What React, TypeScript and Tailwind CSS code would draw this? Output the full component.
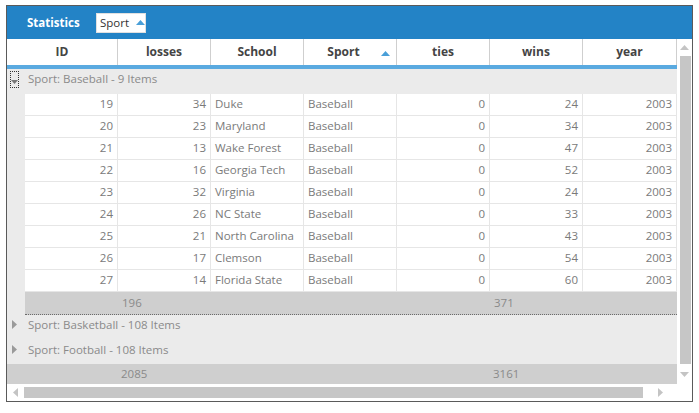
import React from 'react'

type Row = { id: number; losses: number; school: string; ties: number; wins: number; year: number }

// grouped data for the first (expanded) group
const rows: Row[] = [
  { id: 19, losses: 34, school: 'Duke', ties: 0, wins: 24, year: 2003 },
  { id: 20, losses: 23, school: 'Maryland', ties: 0, wins: 34, year: 2003 },
  { id: 21, losses: 13, school: 'Wake Forest', ties: 0, wins: 47, year: 2003 },
  { id: 22, losses: 16, school: 'Georgia Tech', ties: 0, wins: 52, year: 2003 },
  { id: 23, losses: 32, school: 'Virginia', ties: 0, wins: 24, year: 2003 },
  { id: 24, losses: 26, school: 'NC State', ties: 0, wins: 33, year: 2003 },
  { id: 25, losses: 21, school: 'North Carolina', ties: 0, wins: 43, year: 2003 },
  { id: 26, losses: 17, school: 'Clemson', ties: 0, wins: 54, year: 2003 },
  { id: 27, losses: 14, school: 'Florida State', ties: 0, wins: 60, year: 2003 },
]

const font = { fontFamily: '"Open Sans", "Noto Sans", sans-serif' }

const UpTri = ({ className = '' }: { className?: string }) => (
  <svg width="9" height="5" viewBox="0 0 9 5" className={className}>
    <path d="M0 5 L4.5 0 L9 5 Z" fill="currentColor" />
  </svg>
)

const RightTri = ({ color = '#9a9a9a' }: { color?: string }) => (
  <svg width="5" height="9" viewBox="0 0 5 9">
    <path d="M0 0 L5 4.5 L0 9 Z" fill={color} />
  </svg>
)

const HeaderCell = ({ label, w, sort }: { label: string; w: string; sort?: boolean }) => (
  <div className={`${w} relative h-full flex items-center justify-center border-r border-[#cfcfcf] font-bold text-[12px] text-[#444] ${sort ? 'pr-[13px]' : ''}`}>
    {label}
    {sort && <UpTri className="absolute right-[6px] top-[12px] text-[#4a9fd8]" />}
  </div>
)

const Cell = ({ children, w, right }: { children: React.ReactNode; w: string; right?: boolean }) => (
  <div className={`${w} h-full flex items-center border-r border-[#e6e6e6] truncate ${right ? 'justify-end pr-[4px]' : 'pl-[4px]'}`}>
    {children}
  </div>
)

const GroupRow = ({ label, collapsed }: { label: string; collapsed: boolean }) => (
  <div className="h-[25px] flex items-center bg-[#ebebeb] text-[#8a8a8a]">
    <div className="w-[18px] h-full flex items-center">
      {collapsed ? (
        <div className="pl-[5px] pb-[4px] flex">
          <RightTri />
        </div>
      ) : (
        <div className="ml-[3px] mb-[3px] w-[9px] h-[17px] border border-dotted border-[#333] flex items-end justify-center pb-[3px]">
          <svg width="7" height="4" viewBox="0 0 7 4">
            <path d="M0 0 L7 0 L3.5 4 Z" fill="#777" />
          </svg>
        </div>
      )}
    </div>
    <span className="pl-[3px] pb-[5px]">{label}</span>
  </div>
)

export default function App() {
  return (
    <div className="w-[699px] h-[413px] bg-white pt-[5px] pl-[6px] text-[11.5px]" style={font}>
      <div className="w-[687px] h-[397px] border border-[#5a5a5a] flex flex-col">
        {/* toolbar */}
        <div className="h-[33px] bg-[#2383c6] flex items-center pl-[20px] shrink-0">
          <span className="text-white font-bold w-[69px] text-[11.5px]">Statistics</span>
          <div className="h-[20px] w-[50px] bg-white flex items-center pl-[3px] gap-[7px] text-[#333] border border-[#e0e0e0]">
            Sport
            <UpTri className="text-[#4a9fd8]" />
          </div>
        </div>

        <div className="flex flex-1 min-h-0">
          {/* grid area */}
          <div className="w-[670px] flex flex-col">
            <div className="h-[26px] flex bg-white">
              <HeaderCell label="ID" w="w-[111px]" />
              <HeaderCell label="losses" w="w-[93px]" />
              <HeaderCell label="School" w="w-[93px]" />
              <HeaderCell label="Sport" w="w-[93px]" sort />
              <HeaderCell label="ties" w="w-[93px]" />
              <HeaderCell label="wins" w="w-[93px]" />
              <HeaderCell label="year" w="flex-1" />
            </div>
            <div className="h-[4px] bg-[#5aaae0]" />

            <GroupRow label="Sport: Baseball - 9 Items" collapsed={false} />

            <div className="flex">
              <div className="w-[18px] bg-[#ebebeb]" />
              <div className="flex-1 flex flex-col text-[#7a7a7a]">
                {rows.map((r) => (
                  <div key={r.id} className="h-[22px] flex bg-white border-b border-[#e6e6e6]">
                    <Cell w="w-[93px]" right>{r.id}</Cell>
                    <Cell w="w-[93px]" right>{r.losses}</Cell>
                    <Cell w="w-[93px]">{r.school}</Cell>
                    <Cell w="w-[93px]">Baseball</Cell>
                    <Cell w="w-[93px]" right>{r.ties}</Cell>
                    <Cell w="w-[93px]" right>{r.wins}</Cell>
                    <Cell w="flex-1" right>{r.year}</Cell>
                  </div>
                ))}
                <div className="h-[23px] flex items-center bg-[#cfcfcf] border-b border-dotted border-[#6a6a6a] text-[#8a8a8a]">
                  <div className="w-[93px]" />
                  <div className="w-[279px] pl-[4px]">196</div>
                  <div className="w-[93px]" />
                  <div className="pl-[4px]">371</div>
                </div>
              </div>
            </div>

            <GroupRow label="Sport: Basketball - 108 Items" collapsed />
            <GroupRow label="Sport: Football - 108 Items" collapsed />

            <div className="h-[20px] flex items-center bg-[#cfcfcf] text-[#8a8a8a]">
              <div className="w-[111px]" />
              <div className="w-[372px] pl-[3px]">2085</div>
              <div className="pl-[3px]">3161</div>
            </div>
          </div>

          {/* vertical scrollbar */}
          <div className="w-[15px] flex flex-col bg-white">
            <div className="h-[17px] flex items-center justify-center text-[#c4c4c4]">
              <UpTri />
            </div>
            <div className="flex-1 ml-[3px] w-[11px] bg-[#c6c6c6]" />
            <div className="h-[20px] flex items-center justify-center text-[#c4c4c4]">
              <UpTri className="rotate-180" />
            </div>
          </div>
        </div>

        {/* horizontal scrollbar */}
        <div className="h-[17px] shrink-0 flex items-center bg-white">
          <div className="w-[17px] flex items-center justify-center">
            <span className="rotate-180 flex"><RightTri color="#c4c4c4" /></span>
          </div>
          <div className="w-[619px] h-[11px] bg-[#c6c6c6]" />
          <div className="w-[34px] flex items-center justify-center">
            <RightTri color="#c4c4c4" />
          </div>
        </div>
      </div>
    </div>
  )
}
